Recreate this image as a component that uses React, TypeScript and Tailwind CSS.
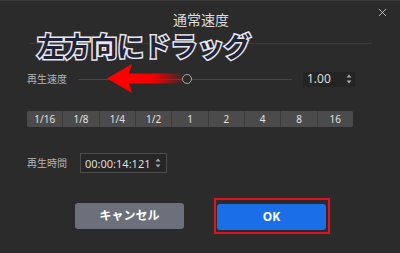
import { X } from "lucide-react";

const PRESETS = ["1/16", "1/8", "1/4", "1/2", "1", "2", "4", "8", "16"];

const font = "font-['Noto_Sans','Noto_Sans_CJK_JP',sans-serif]";
const label = "text-[10px] text-[#b4b4b4] leading-none";

function Spin() {
  return (
    <svg width="6" height="10" viewBox="0 0 6 10" className="text-[#a8a8a8]">
      <path d="M3 0.5 L5.5 3.5 H0.5 Z" fill="currentColor" />
      <path d="M3 9.5 L5.5 6.5 H0.5 Z" fill="currentColor" />
    </svg>
  );
}

function DragArrow() {
  return (
    <svg width="80" height="30" viewBox="0 0 80 30">
      <defs>
        <linearGradient id="shaft" x1="0" x2="1" y1="0" y2="0">
          <stop offset="0" stopColor="#ff0000" />
          <stop offset="0.45" stopColor="#f20000" />
          <stop offset="1" stopColor="#ff0000" stopOpacity="0" />
        </linearGradient>
      </defs>
      <path d="M20 9.5 H78 V19.5 H20 Z" fill="url(#shaft)" />
      <path d="M0 14.5 L25 0 L22 9.5 L22 19.5 L25 29 Z" fill="#ff0000" />
    </svg>
  );
}

export default function App() {
  return (
    <div className={`relative flex h-[253px] w-[400px] flex-col overflow-hidden border-t border-[#3a3a3a] bg-[#2b2b2b] ${font}`}>
      {/* Header */}
      <div className="relative mx-[30px] mr-[28px] flex h-[43px] justify-center border-b border-[#3b3b3b] pt-[10px]">
        <span className="text-[14px] leading-[18px] text-[#dcdcdc]">通常速度</span>
      </div>
      <button className="absolute right-[11px] top-[5px] text-[#cfcfcf]">
        <X size={13} strokeWidth={1.6} />
      </button>

      {/* annotation */}
      <div className="absolute left-[37px] top-[29px] text-[27px] font-bold leading-[34px] tracking-[-0.3px] text-[#1f2438] [-webkit-text-stroke:3px_#e8e8ee] [paint-order:stroke_fill]">
        左方向にドラッグ
      </div>

      {/* Speed slider */}
      <div className="mt-[25px] flex h-[20px] items-center pl-[27px]">
        <span className={`${label} w-[51px]`}>再生速度</span>
        <div className="relative flex h-full w-[214px] items-center">
          <div className="h-px w-full bg-[#474747]" />
          <div className="absolute left-[104px] top-[5px] h-[10px] w-[10px] rounded-full border-[1.5px] border-[#a9a9a9] bg-[#2b2b2b]" />
          <div className="absolute -top-[5px] left-[29px]">
            <DragArrow />
          </div>
        </div>
        <div className="ml-[11px] flex h-[15px] w-[52px] items-center justify-between bg-[#242424] pl-[4px] pr-[3px]">
          <span className="text-[12px] leading-none text-[#dedede]">1.00</span>
          <Spin />
        </div>
      </div>

      {/* Presets */}
      <div className="ml-[27px] mt-[22px] grid h-[16px] w-[326px] grid-cols-9 gap-px overflow-hidden rounded-[2px] bg-[#3a3a3a]">
        {PRESETS.map((p) => (
          <button key={p} className="flex items-center justify-center bg-[#4b4b4b] text-[10px] leading-none text-[#e2e2e2]">
            {p}
          </button>
        ))}
      </div>

      {/* Play time */}
      <div className="mt-[26px] flex h-[20px] items-center pl-[27px]">
        <span className={`${label} w-[53px]`}>再生時間</span>
        <div className="flex h-[20px] w-[87px] items-center justify-between border border-[#4c4c4c] bg-[#262626] pl-[4px] pr-[5px]">
          <span className="text-[11px] leading-none text-[#dedede]">00:00:14:121</span>
          <Spin />
        </div>
      </div>

      {/* Actions */}
      <div className="mt-[30px] flex justify-center gap-[33px] pl-[1px]">
        <button className="h-[26px] w-[109px] rounded-[3px] bg-[#6b707a] text-[12px] font-bold text-white">
          キャンセル
        </button>
        <div className="relative">
          <button className="h-[26px] w-[109px] rounded-[3px] bg-[#1a6ee8] text-[12px] font-bold text-white">
            OK
          </button>
          <div className="absolute -bottom-[4px] -left-[3px] -right-[4px] -top-[5px] border-2 border-[#e3121b]" />
        </div>
      </div>
    </div>
  );
}
